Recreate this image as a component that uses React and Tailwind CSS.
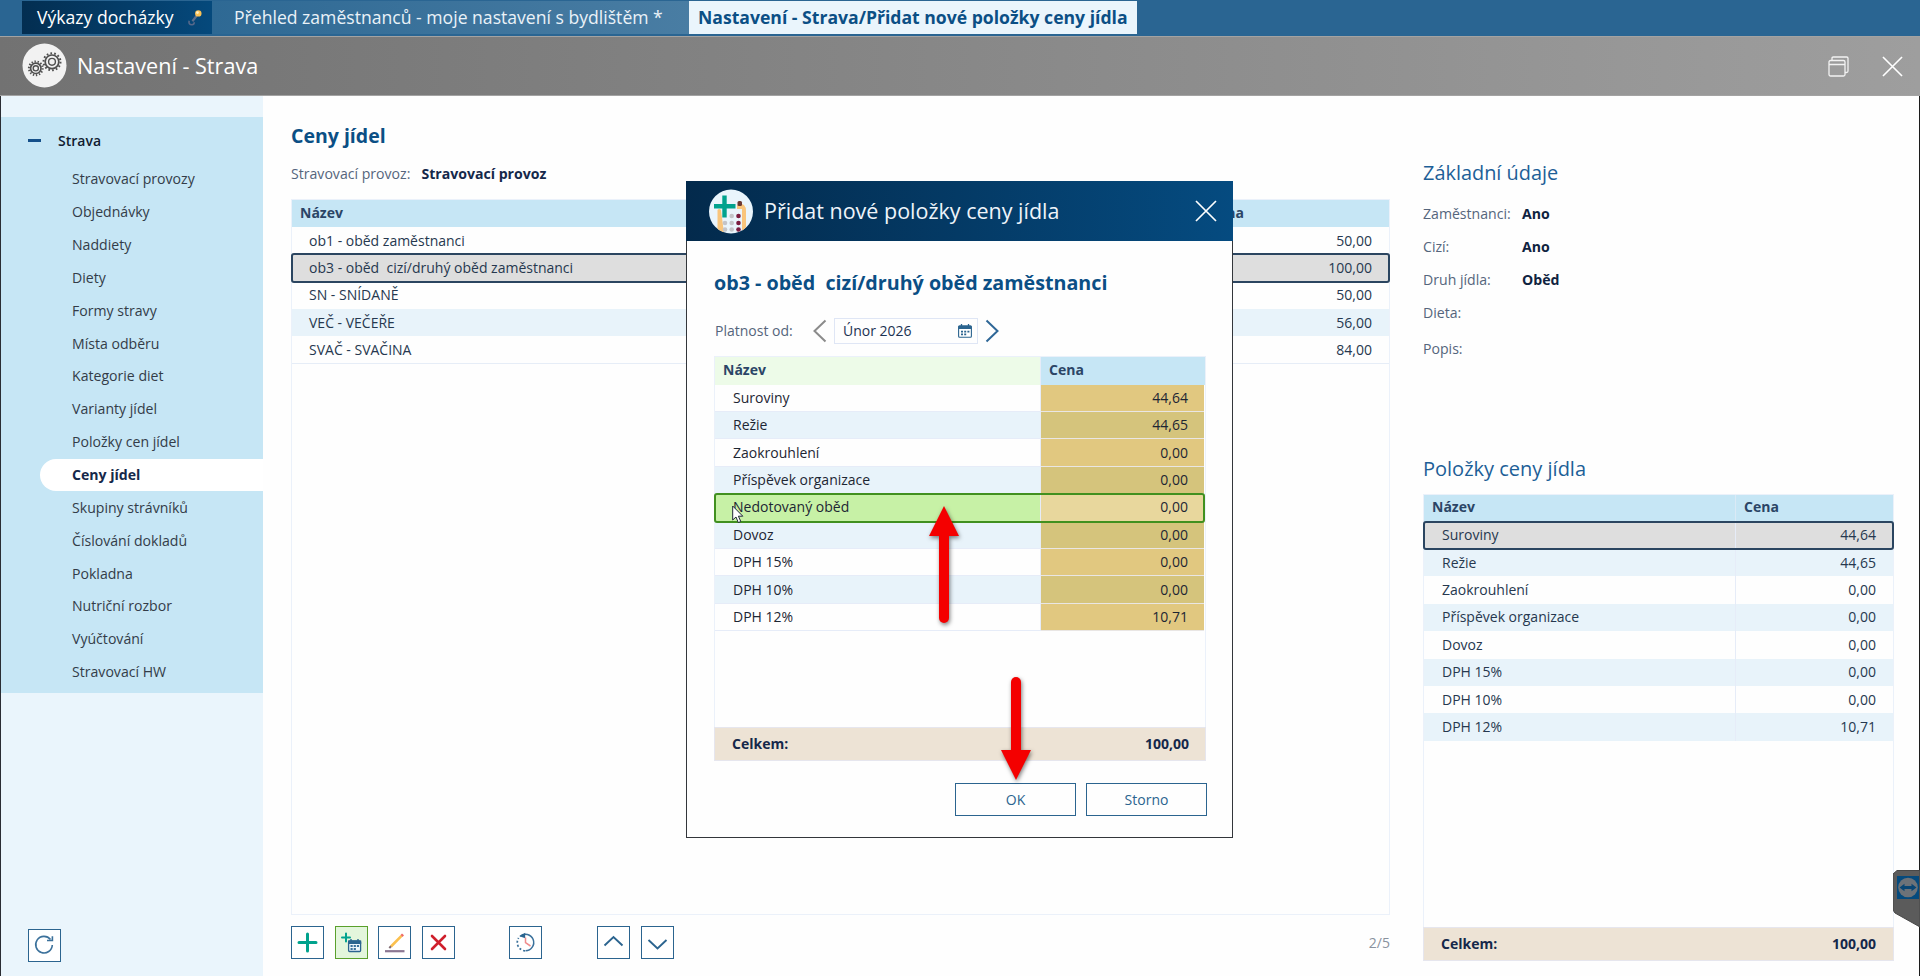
import React, { useState } from 'react';

const menuItems = [
  'Stravovací provozy',
  'Objednávky',
  'Naddiety',
  'Diety',
  'Formy stravy',
  'Místa odběru',
  'Kategorie diet',
  'Varianty jídel',
  'Položky cen jídel',
  'Ceny jídel',
  'Skupiny strávníků',
  'Číslování dokladů',
  'Pokladna',
  'Nutriční rozbor',
  'Vyúčtování',
  'Stravovací HW'
];

const meals = [
  { name: 'ob1 - oběd zaměstnanci', price: '50,00' },
  { name: 'ob3 - oběd  cizí/druhý oběd zaměstnanci', price: '100,00' },
  { name: 'SN - SNÍDANĚ', price: '50,00' },
  { name: 'VEČ - VEČEŘE', price: '56,00' },
  { name: 'SVAČ - SVAČINA', price: '84,00' }
];

const priceItems = [
  { name: 'Suroviny', price: '44,64' },
  { name: 'Režie', price: '44,65' },
  { name: 'Zaokrouhlení', price: '0,00' },
  { name: 'Příspěvek organizace', price: '0,00' },
  { name: 'Dovoz', price: '0,00' },
  { name: 'DPH 15%', price: '0,00' },
  { name: 'DPH 10%', price: '0,00' },
  { name: 'DPH 12%', price: '10,71' }
];

const dialogItems = [
  ...priceItems.slice(0, 4),
  { name: 'Nedotovaný oběd', price: '0,00', active: true },
  ...priceItems.slice(4)
];

const details = [
  { label: 'Zaměstnanci:', value: 'Ano' },
  { label: 'Cizí:', value: 'Ano' },
  { label: 'Druh jídla:', value: 'Oběd' },
  { label: 'Dieta:', value: '' }
];

// One toothed wheel, used twice in the header icon
const Gear = ({ cx, cy, r }) => {
  const step = (2 * Math.PI * (r + 1.7)) / 14;
  return (
    <g stroke="#505050" fill="none">
      <circle cx={cx} cy={cy} r={r} strokeWidth="1.7" />
      <circle cx={cx} cy={cy} r={r + 1.7} strokeWidth="2" strokeDasharray={`${step * 0.45} ${step * 0.55}`} />
      <circle cx={cx} cy={cy} r={r * 0.5} strokeWidth="1.4" />
    </g>
  );
};

const GearsIcon = () => (
  <svg width="45" height="45" viewBox="0 0 45 45">
    <circle cx="22.5" cy="22.5" r="22" fill="#f2f2f2" />
    <Gear cx={13.8} cy={25.3} r={5.2} />
    <Gear cx={30} cy={18.8} r={6.8} />
  </svg>
);

const CloseIcon = ({ size }) => (
  <svg width={size} height={size} viewBox="0 0 22 22" stroke="#fff" strokeWidth="1.7" fill="none">
    <path d="M1 1L21 21M21 1L1 21" />
  </svg>
);

const WindowIcon = () => (
  <svg width="21" height="21" viewBox="0 0 21 21" stroke="#f2f2f2" strokeWidth="1.3" fill="none">
    <rect x="1" y="4.5" width="16" height="15.5" rx="1.5" />
    <path d="M1 8.5H17M4 4.5V2.3Q4 1 5.3 1H18.7Q20 1 20 2.3V15Q20 16.5 18.5 16.5H17" />
  </svg>
);

const AbacusIcon = () => (
  <svg width="44" height="45" viewBox="0 0 44 45">
    <defs>
      <clipPath id="round">
        <circle cx="22" cy="22.5" r="22" />
      </clipPath>
    </defs>
    <circle cx="22" cy="22.5" r="22" fill="#eaf5fc" />
    <g clipPath="url(#round)">
      <path d="M8.5 44V21Q10 19 12 21L15 44Z" fill="#f9c57c" />
      <path d="M28 19V16Q32 14 35 16Q37 18 37 22V44H33V20H28Z" fill="#f9c57c" />
      <rect x="28.5" y="12" width="4.5" height="5" rx="1.5" fill="#6d3a33" />
      <path d="M5 17.3H26.5M15.5 6.5V28.5" stroke="#00a28d" strokeWidth="4.4" />
      {[27, 34, 40.5].map(y => (
        <g key={y}>
          {y > 27 && <circle cx="16" cy={y} r="2.3" fill="#c4c4c8" />}
          <circle cx="22.7" cy={y} r="2.3" fill="#c4c4c8" />
          <circle cx="29.5" cy={y} r="2.3" fill="#7b1c3f" />
        </g>
      ))}
    </g>
  </svg>
);

const CalendarGlyph = () => (
  <svg width="14" height="14" viewBox="0 0 14 14">
    <rect x="0.6" y="1.8" width="12.8" height="11.5" rx="1" fill="#fff" stroke="#2b648f" strokeWidth="1.1" />
    <path d="M0.5 2H13.5V5H0.5Z" fill="#2b648f" />
    <path d="M3.5 0V3M10.5 0V3" stroke="#2b648f" strokeWidth="1.3" />
    <path d="M3 7.6H11.5M3 10.4H9" stroke="#2b648f" strokeWidth="1.6" strokeDasharray="2 1.2" />
  </svg>
);

const PinIcon = () => (
  <svg width="14" height="18" viewBox="0 0 14 18">
    <path d="M8.7 6.8L4.4 12.3" stroke="#5c6e8c" strokeWidth="2.2" />
    <path d="M1.2 11.8Q0.2 15.8 4 15.8Q6.2 15.6 6.3 13.2" fill="none" stroke="#56688a" strokeWidth="1.6" />
    <circle cx="10.3" cy="4.4" r="3.2" fill="#fbc255" />
    <circle cx="9.5" cy="3.6" r="1.3" fill="#fff0c8" />
  </svg>
);

const ToolButton = ({ active, className = '', children }) => (
  <button
    className={`flex items-center justify-center w-[33px] h-[33px] border ${
      active ? 'bg-[#e3f6dc] border-[#5aa02c]' : 'bg-white border-[#2b648f]'
    } ${className}`}
  >
    <svg width="31" height="31" viewBox="0 0 31 31" fill="none">
      {children}
    </svg>
  </button>
);

const TopTabs = () => (
  <div className="flex h-9 pt-px bg-[#2a6592] pl-[22px] text-[17.6px] leading-[32px] whitespace-pre shrink-0">
    <div className="flex h-[33px] w-[190px] pl-[15px] bg-gradient-to-r from-[#032e51] to-[#05497c] text-white">
      <span className="w-[151px]">Výkazy docházky</span>
      <div className="pt-[8px]">
        <PinIcon />
      </div>
    </div>
    <div className="h-[33px] w-[477px] pl-[22px] bg-gradient-to-r from-[#2e6994] to-[#497da3] text-[#eaf2f8]">
      Přehled zaměstnanců - moje nastavení s bydlištěm *
    </div>
    <div className="h-[33px] w-[448px] pl-[9px] bg-[#eaf5fc] font-bold text-[#0b4f85]">
      Nastavení - Strava/Přidat nové položky ceny jídla
    </div>
  </div>
);

const TitleBar = () => (
  <div className="flex items-center h-[60px] pl-[22px] pr-[17px] border-y border-[#a3a3a3] bg-gradient-to-r from-[#727272] to-[#9e9e9e] shrink-0">
    <div className="pb-[2px]">
      <GearsIcon />
    </div>
    <h1 className="ml-[10px] text-[21.6px] text-white flex-1">Nastavení - Strava</h1>
    <WindowIcon />
    <div className="ml-[33px]">
      <CloseIcon size={21} />
    </div>
  </div>
);

const Sidebar = ({ selected, onSelect }) => (
  <div className="flex flex-col w-[262px] pt-[21px] bg-[#eaf5fc] shrink-0">
    <div className="h-[576px] bg-[#c6e6f5]">
      <div className="flex items-center h-[46px] pt-px pl-[27px] font-semibold text-[#111c30]">
        <span className="w-[13px] h-[3px] mr-[17px] bg-[#15508a]"></span>
        Strava
      </div>
      {menuItems.map(item => (
        <button
          key={item}
          onClick={() => onSelect(item)}
          className={`flex items-center h-[32.85px] w-[223px] ml-[39px] pl-8 text-[14.1px] rounded-l-full ${
            item === selected ? 'bg-white font-bold text-[#15284a]' : 'text-[#333c48]'
          }`}
        >
          {item}
        </button>
      ))}
    </div>
    <div className="flex-1"></div>
    <div className="pl-[27px] pb-[14px]">
      <ToolButton>
        <path d="M21.5 9.5A8.3 8.3 0 1 0 23.3 15" stroke="#3b719b" strokeWidth="1.6" />
        <path d="M18 10.5H23.4V6.3" stroke="#3b719b" strokeWidth="1.6" />
      </ToolButton>
    </div>
  </div>
);

const MealsPanel = () => (
  <div className="flex flex-col w-[1099px] ml-7">
    <h2 className="mt-[27px] h-[26px] leading-[26px] text-[19.5px] font-bold text-[#0b4f85]">Ceny jídel</h2>
    <div className="flex items-center mt-[14px] h-[22px] text-[14.1px] text-[#55657c]">
      Stravovací provoz:
      <span className="ml-[11px] font-bold text-[#15284a]">Stravovací provoz</span>
    </div>
    <div className="mt-[14px] h-[716px] border border-[#ebf1fa]">
      <div className="flex items-center h-[27px] pb-[2px] bg-[#c6e6f5] font-bold text-[#2b4566]">
        <span className="w-[917px] pl-2">Název</span>
        <span>Cena</span>
      </div>
      {meals.map((meal, i) => (
        <div
          key={meal.name}
          className={`flex items-center h-[27.35px] pl-[17px] pr-[17px] whitespace-pre ${
            i === 1 ? 'relative bg-[#dedede] outline-2 -outline-offset-1 outline-[#2b4560] rounded-xs' : ''
          } ${i === 3 ? 'bg-[#e8f3fa]' : ''} ${i === 4 ? 'border-b border-[#e6edf7]' : ''}`}
        >
          <span className="flex-1">{meal.name}</span>
          <span>{meal.price}</span>
        </div>
      ))}
    </div>
    <div className="flex items-center mt-[11px]">
      <ToolButton>
        <path d="M7 15.5H24M15.5 7V24" stroke="#00a28d" strokeWidth="3" strokeLinecap="round" />
      </ToolButton>
      <ToolButton active className="ml-[11px]">
        <path d="M6 10.5H14M10 6.5V14.5" stroke="#00a28d" strokeWidth="2" strokeLinecap="round" />
        <rect x="12.6" y="14" width="12" height="10.5" rx="1" fill="#eef6fb" stroke="#2b648f" strokeWidth="1.3" />
        <path d="M12 13.5H25.2V17H12Z" fill="#2b648f" />
        <path d="M15 12V14M22 12V14" stroke="#2b648f" strokeWidth="1.4" />
        <path d="M14.5 19H23M14.5 22H20" stroke="#3b719b" strokeWidth="1.8" strokeDasharray="2.2 1" />
      </ToolButton>
      <ToolButton className="ml-[10px]">
        <path d="M12 19.5L22.5 8.8" stroke="#fbc04e" strokeWidth="2.6" />
        <path d="M22.5 9L24 7.4" stroke="#ef6a63" strokeWidth="2.8" />
        <path d="M10.3 21L12 19.3" stroke="#7f6a70" strokeWidth="2" />
        <path d="M6 24.2H25.5" stroke="#8b7792" strokeWidth="2.2" />
      </ToolButton>
      <ToolButton className="ml-[11px]">
        <path d="M9 9L22 22M22 9L9 22" stroke="#cf1f2c" strokeWidth="2.6" strokeLinecap="round" />
      </ToolButton>
      <ToolButton className="ml-[54px]">
        <path d="M10 9.2A8.3 8.3 0 1 1 15.5 23.8" stroke="#3b719b" strokeWidth="1.5" />
        <path d="M15 23.8A8.3 8.3 0 0 1 8.6 11" stroke="#3b719b" strokeWidth="1.7" strokeDasharray="2 2" />
        <path d="M9.5 9.2L15.2 5.8V11.3Z" fill="#2b648f" />
        <path d="M15.5 10.5V15.7L20.5 19" stroke="#f08c8c" strokeWidth="1.5" />
      </ToolButton>
      <ToolButton className="ml-[55px]">
        <path d="M6.5 18.5L15.5 10L24.5 18.5" stroke="#2b648f" strokeWidth="1.9" />
      </ToolButton>
      <ToolButton className="ml-[11px]">
        <path d="M6.5 13L15.5 21.5L24.5 13" stroke="#2b648f" strokeWidth="1.9" />
      </ToolButton>
      <span className="ml-auto text-[#8a929e]">2/5</span>
    </div>
  </div>
);

const DetailPanel = () => (
  <div className="flex flex-col w-[471px] ml-[33px]">
    <h2 className="mt-[64px] h-[26px] leading-[26px] text-[19.9px] text-[#1d5f97]">Základní údaje</h2>
    <div className="mt-[11px] text-[14.1px] text-[#55657c]">
      {details.map(row => (
        <div key={row.label} className="flex items-center h-[33px]">
          <span className="w-[99px]">{row.label}</span>
          <span className="font-bold text-[#0f2340]">{row.value}</span>
        </div>
      ))}
      <div className="flex items-center h-[39px]">Popis:</div>
    </div>
    <h2 className="mt-[88px] h-[26px] leading-[26px] text-[20px] text-[#1d5f97]">Položky ceny jídla</h2>
    <div className="mt-[12px] h-[433px] border border-b-0 border-[#ebf1fa]">
      <div className="flex h-[26.6px] bg-[#c6e6f5] font-bold text-[#2b4566] leading-[24px]">
        <span className="h-full w-[312px] pl-2 border-r border-[#dbeaf6]">Název</span>
        <span className="pl-2">Cena</span>
      </div>
      {priceItems.map((item, i) => (
        <div
          key={item.name}
          className={`flex items-center h-[27.4px] ${
            i === 0 ? 'relative bg-[#dedede] outline-2 -outline-offset-1 outline-[#2b4560] rounded-xs' : i % 2 ? 'bg-[#e8f3fa]' : ''
          }`}
        >
          <span className="flex items-center h-full w-[312px] pl-[18px] border-r border-[#e6ecf8]">{item.name}</span>
          <span className="flex-1 text-right pr-[17px]">{item.price}</span>
        </div>
      ))}
    </div>
    <div className="flex items-center justify-between h-[34px] px-[17px] bg-[#ede3d5] border border-[#e6e6ee] font-bold text-[#15284a]">
      <span>Celkem:</span>
      <span>100,00</span>
    </div>
  </div>
);

const PriceDialog = () => (
  <div className="absolute left-[686px] top-[181px] w-[547px] h-[657px] bg-[#fefefe] border border-[#33363b]">
    <div className="flex items-center h-[60px] pl-[23px] pr-4 -mx-px -mt-px bg-gradient-to-r from-[#032a4c] to-[#054b80]">
      <AbacusIcon />
      <h2 className="ml-[11px] flex-1 text-[21.5px] text-[#eef4fa]">Přidat nové položky ceny jídla</h2>
      <CloseIcon size={22} />
    </div>
    <div className="px-[27px]">
      <h3 className="mt-[29px] h-[26px] leading-[26px] text-[19.7px] font-bold text-[#0b4f85] whitespace-pre">
        ob3 - oběd  cizí/druhý oběd zaměstnanci
      </h3>
      <div className="flex items-center mt-[22px] h-[26px] pl-px text-[#55657c]">
        <span className="w-[97px]">Platnost od:</span>
        <svg width="15" height="24" viewBox="0 0 15 24" fill="none" stroke="#8b8b8b" strokeWidth="2">
          <path d="M13.5 1.5L2.5 12L13.5 22.5" />
        </svg>
        <div className="flex items-center justify-between w-[144px] h-[26px] ml-[7px] pl-[8px] pr-[5px] border border-[#dfe6f5] text-[#1c3252]">
          Únor 2026
          <CalendarGlyph />
        </div>
        <svg className="ml-[7px]" width="15" height="24" viewBox="0 0 15 24" fill="none" stroke="#2f6797" strokeWidth="2">
          <path d="M1.5 1.5L12.5 12L1.5 22.5" />
        </svg>
      </div>
      <div className="mt-[12px] h-[371px] w-[492px] border border-b-0 border-[#ebf1fa]">
        <div className="flex h-[27.6px] font-bold text-[#2b4566] leading-[25px]">
          <span className="w-[326px] pl-2 bg-[#edfbe8] border-r border-[#e6ecf8]">Název</span>
          <span className="flex-1 pl-2 bg-[#c6e6f5]">Cena</span>
        </div>
        {dialogItems.map((item, i) => {
          // the row below the active one keeps the stripe
          const striped = i % 2 === 1;
          return (
            <div
              key={item.name}
              className={`flex items-center h-[27.42px] mr-px text-[#1d2633] ${
                item.active ? 'relative bg-[#c7f1a6] outline-2 -outline-offset-1 outline-[#41901f] rounded-xs' : striped ? 'bg-[#e8f3fa]' : ''
              }`}
            >
              <span className="flex items-center h-full w-[326px] pl-[18px] border-r border-b border-[#e6ecf8]">{item.name}</span>
              <span
                className={`flex items-center justify-end h-full flex-1 pr-4 border-b border-[#e9e6e4] ${
                  item.active ? 'bg-[#e8d79d]' : striped ? 'bg-[#d5c47c]' : 'bg-[#e1c880]'
                }`}
              >
                {item.price}
              </span>
            </div>
          );
        })}
      </div>
      <div className="flex items-center justify-between w-[492px] h-[34px] pl-[17px] pr-4 bg-[#ede3d5] border border-[#e6e6ee] font-bold text-[#15284a]">
        <span>Celkem:</span>
        <span>100,00</span>
      </div>
      <div className="flex justify-end gap-[10px] mt-[22px] w-[493px] text-[#2b648f]">
        <button className="w-[121px] h-[33px] border border-[#2b648f]">OK</button>
        <button className="w-[121px] h-[33px] border border-[#2b648f]">Storno</button>
      </div>
    </div>
  </div>
);

// Red pointers and the mouse cursor lying over the dialog
const Annotations = () => (
  <>
    <svg className="absolute left-[924px] top-[499px] drop-shadow-[1px_2px_2px_rgba(0,0,0,0.5)]" width="40" height="130" viewBox="0 0 40 130">
      <path d="M20 30V119" stroke="#f40000" strokeWidth="10" strokeLinecap="round" />
      <path d="M20 7L35 37H5Z" fill="#f40000" />
    </svg>
    <svg className="absolute left-[996px] top-[670px] drop-shadow-[1px_2px_2px_rgba(0,0,0,0.5)]" width="40" height="115" viewBox="0 0 40 115">
      <path d="M20 12V90" stroke="#f40000" strokeWidth="10" strokeLinecap="round" />
      <path d="M20 110L35 80H5Z" fill="#f40000" />
    </svg>
    <svg className="absolute left-[732px] top-[505px]" width="12" height="19" viewBox="0 0 12 19">
      <path d="M0.7 1V15L4 12L6.3 17.6L8.8 16.5L6.4 11.2H10.8Z" fill="#fff" stroke="#1f2937" strokeWidth="1" />
    </svg>
  </>
);

const RemoteTab = () => (
  <svg className="absolute left-[1893px] top-[870px]" width="27" height="58" viewBox="0 0 27 58">
    <path d="M0 4L4 0.5H27V57L2 43L0 40Z" fill="#5b5b5b" stroke="#474747" />
    <rect x="4" y="6" width="22" height="23" fill="#054a7d" />
    <circle cx="15" cy="17.5" r="9.8" fill="#6d7278" />
    <path d="M6.5 17.5L11.5 13.7V16H18.5V13.7L23.5 17.5L18.5 21.3V19H11.5V21.3Z" fill="#0a4674" />
  </svg>
);

const App = () => {
  const [selected, setSelected] = useState('Ceny jídel');

  return (
    <div className="relative flex flex-col w-[1920px] h-[976px] overflow-hidden bg-[#fefefe] font-['Open_Sans','Noto_Sans',sans-serif] text-[14px] leading-[20px] text-[#26384f]">
      <TopTabs />
      <TitleBar />
      <div className="flex flex-1 border-l border-r border-l-[#2a2d33] border-r-[#1c1c1c]">
        <Sidebar selected={selected} onSelect={setSelected} />
        <MealsPanel />
        <DetailPanel />
      </div>
      <PriceDialog />
      <Annotations />
      <RemoteTab />
    </div>
  );
};

export default App;
